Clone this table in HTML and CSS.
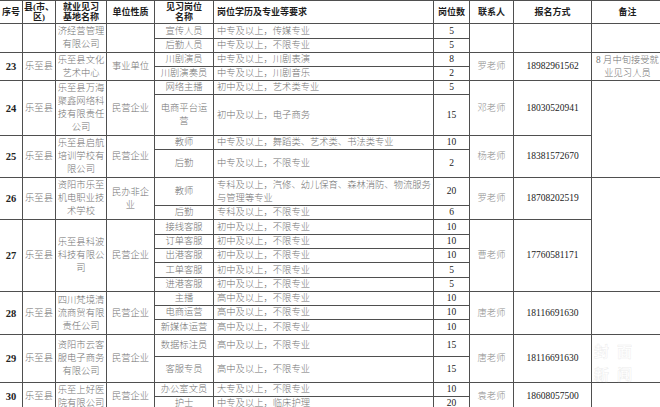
FILE: index.html
```html
<!DOCTYPE html>
<html lang="zh-CN">
<head>
<meta charset="utf-8">
<title>就业见习岗位表</title>
<link rel="stylesheet" href="styles.css">
</head>
<body>
<div class="page">
<table class="sheet">
<colgroup>
<col class="c-no"><col class="c-county"><col class="c-base"><col class="c-type"><col class="c-post"><col class="c-req"><col class="c-num"><col class="c-contact"><col class="c-phone"><col class="c-note">
</colgroup>
<thead>
<tr class="r-head">
<th>序号</th><th>县(市、<br>区)</th><th>就业见习<br>基地名称</th><th>单位性质</th><th>见习岗位<br>名称</th><th class="req">岗位学历及专业等要求</th><th>岗位数</th><th>联系人</th><th>报名方式</th><th>备注</th>
</tr>
</thead>
<tbody>
<tr class="h15">
<td rowspan="2"></td><td rowspan="2"></td><td rowspan="2" class="base">济经营管理<br>有限公司</td><td rowspan="2"></td>
<td class="post">宣传人员</td><td class="req">中专及以上，传媒专业</td><td class="num">5</td>
<td rowspan="2"></td><td rowspan="2"></td><td rowspan="2"></td>
</tr>
<tr class="h14"><td class="post">后勤人员</td><td class="req">中专及以上，不限专业</td><td class="num">5</td></tr>

<tr class="h14">
<td rowspan="2" class="no">23</td><td rowspan="2">乐至县</td><td rowspan="2" class="base">乐至县文化<br>艺术中心</td><td rowspan="2">事业单位</td>
<td class="post">川剧演员</td><td class="req">中专及以上，川剧表演</td><td class="num">8</td>
<td rowspan="2" class="contact">罗老师</td><td rowspan="2" class="phone">18982961562</td><td rowspan="2" class="note">8 月中旬接受就<br>业见习人员</td>
</tr>
<tr class="h14"><td class="post">川剧演奏员</td><td class="req">中专及以上，川剧音乐</td><td class="num">2</td></tr>

<tr class="h14">
<td rowspan="2" class="no">24</td><td rowspan="2">乐至县</td><td rowspan="2" class="base">乐至县万海<br>聚鑫网络科<br>技有限责任<br>公司</td><td rowspan="2">民营企业</td>
<td class="post">网络主播</td><td class="req">初中及以上，艺术类专业</td><td class="num">5</td>
<td rowspan="2" class="contact">邓老师</td><td rowspan="2" class="phone">18030520941</td><td rowspan="4" class="note"></td>
</tr>
<tr class="h41"><td class="post">电商平台运<br>营</td><td class="req">初中及以上，电子商务</td><td class="num">15</td></tr>

<tr class="h14">
<td rowspan="2" class="no">25</td><td rowspan="2">乐至县</td><td rowspan="2" class="base">乐至县启航<br>培训学校有<br>限公司</td><td rowspan="2">民营企业</td>
<td class="post">教师</td><td class="req">中专及以上，舞蹈类、艺术类、书法类专业</td><td class="num">10</td>
<td rowspan="2" class="contact">杨老师</td><td rowspan="2" class="phone">18381572670</td>
</tr>
<tr class="h28"><td class="post">后勤</td><td class="req">中专及以上，不限专业</td><td class="num">2</td></tr>

<tr class="h28">
<td rowspan="2" class="no">26</td><td rowspan="2">乐至县</td><td rowspan="2" class="base">资阳市乐至<br>机电职业技<br>术学校</td><td rowspan="2">民办非企<br>业</td>
<td class="post">教师</td><td class="req">专科及以上，汽修、幼儿保育、森林消防、物流服务<br>与管理等专业</td><td class="num">20</td>
<td rowspan="2" class="contact">罗老师</td><td rowspan="2" class="phone">18708202519</td><td rowspan="7" class="note"></td>
</tr>
<tr class="h13"><td class="post">后勤</td><td class="req">专科及以上，不限专业</td><td class="num">6</td></tr>

<tr class="h15">
<td rowspan="5" class="no">27</td><td rowspan="5">乐至县</td><td rowspan="5" class="base">乐至县科波<br>科技有限公<br>司</td><td rowspan="5">民营企业</td>
<td class="post">接线客服</td><td class="req">初中及以上，不限专业</td><td class="num">10</td>
<td rowspan="5" class="contact">曹老师</td><td rowspan="5" class="phone">17760581171</td>
</tr>
<tr class="h14"><td class="post">订单客服</td><td class="req">初中及以上，不限专业</td><td class="num">10</td></tr>
<tr class="h14"><td class="post">出港客服</td><td class="req">初中及以上，不限专业</td><td class="num">10</td></tr>
<tr class="h15"><td class="post">工单客服</td><td class="req">初中及以上，不限专业</td><td class="num">5</td></tr>
<tr class="h14"><td class="post">进港客服</td><td class="req">初中及以上，不限专业</td><td class="num">5</td></tr>

<tr class="h14">
<td rowspan="3" class="no">28</td><td rowspan="3">乐至县</td><td rowspan="3" class="base">四川梵境清<br>流商贸有限<br>责任公司</td><td rowspan="3">民营企业</td>
<td class="post">主播</td><td class="req">高中及以上，不限专业</td><td class="num">10</td>
<td rowspan="3" class="contact">唐老师</td><td rowspan="3" class="phone">18116691630</td><td rowspan="3" class="note"></td>
</tr>
<tr class="h14"><td class="post">电商运营</td><td class="req">高中及以上，不限专业</td><td class="num">10</td></tr>
<tr class="h15"><td class="post">新媒体运营</td><td class="req">高中及以上，不限专业</td><td class="num">10</td></tr>

<tr class="h22">
<td rowspan="2" class="no">29</td><td rowspan="2">乐至县</td><td rowspan="2" class="base">资阳市云客<br>服电子商务<br>有限公司</td><td rowspan="2">民营企业</td>
<td class="post">数据标注员</td><td class="req">高中及以上，不限专业</td><td class="num">15</td>
<td rowspan="2" class="contact">唐老师</td><td rowspan="2" class="phone">18116691630</td><td rowspan="2" class="note"></td>
</tr>
<tr class="h26"><td class="post">客服专员</td><td class="req">高中及以上，不限专业</td><td class="num">15</td></tr>

<tr class="h13">
<td rowspan="2" class="no">30</td><td rowspan="2">乐至县</td><td rowspan="2" class="base">乐至上好医<br>院有限公司</td><td rowspan="2">民营企业</td>
<td class="post">办公室文员</td><td class="req">大专及以上，不限专业</td><td class="num">10</td>
<td rowspan="2" class="contact">袁老师</td><td rowspan="2" class="phone">18608057500</td><td rowspan="2" class="note"></td>
</tr>
<tr class="h13"><td class="post">护士</td><td class="req">中专及以上，临床护理</td><td class="num">20</td></tr>
</tbody>
</table>
<div class="mark"><span class="mark-line">封面</span><span class="mark-line">新闻</span></div>
</div>
</body>
</html>
```

FILE: styles.css
```css
html, body {
  margin: 0;
  padding: 0;
  background: #fff;
  overflow: hidden;
}

.page {
  position: relative;
  width: 660px;
  height: 407px;
  overflow: hidden;
}

.sheet {
  table-layout: fixed;
  border-collapse: collapse;
  width: 664px;
  margin-left: -1px;
  font-family: "Liberation Serif", "Noto Sans CJK SC", serif;
  font-size: 9.3px;
  font-weight: 300;
  color: #737373;
}

.c-no { width: 23px; }
.c-county { width: 33px; }
.c-base { width: 51px; }
.c-type { width: 48px; }
.c-post { width: 59px; }
.c-req { width: 220px; }
.c-num { width: 36px; }
.c-contact { width: 44px; }
.c-phone { width: 78px; }
.c-note { width: 72px; }

.sheet th,
.sheet td {
  border: 1px solid #4f4f4f;
  padding: 0 1px;
  text-align: center;
  vertical-align: middle;
  line-height: 13px;
  white-space: nowrap;
  overflow: hidden;
}

.sheet th {
  font-weight: 700;
  color: #1e1e1e;
  line-height: 10px;
  font-size: 9px;
}

.sheet .req {
  text-align: left;
  padding-left: 3px;
}

.r-head { height: 23px; }
.h13 { height: 13px; }
.h14 { height: 14px; }
.h15 { height: 15px; }
.h22 { height: 22px; }
.h26 { height: 26px; }
.h28 { height: 28px; }
.h41 { height: 41px; }

.sheet .no {
  font-size: 10.5px;
  font-weight: 700;
  color: #222;
}

.sheet .num,
.sheet .phone {
  font-size: 9.5px;
  color: #222;
  font-weight: 400;
}

.sheet .contact {
  color: #8e8e8e;
}

.sheet .note {
  line-height: 13px;
  white-space: normal;
}

.mark {
  position: absolute;
  left: 594px;
  top: 340px;
  display: flex;
  flex-direction: column;
  gap: 1px;
  font-family: "Noto Sans CJK SC", sans-serif;
  font-weight: 700;
  font-size: 15px;
  line-height: 22px;
  letter-spacing: 8px;
  color: rgba(255, 255, 255, 0.7);
  -webkit-text-stroke: 0.5px rgba(200, 200, 200, 0.35);
}

.mark-line {
  display: block;
  height: 22px;
}
```
